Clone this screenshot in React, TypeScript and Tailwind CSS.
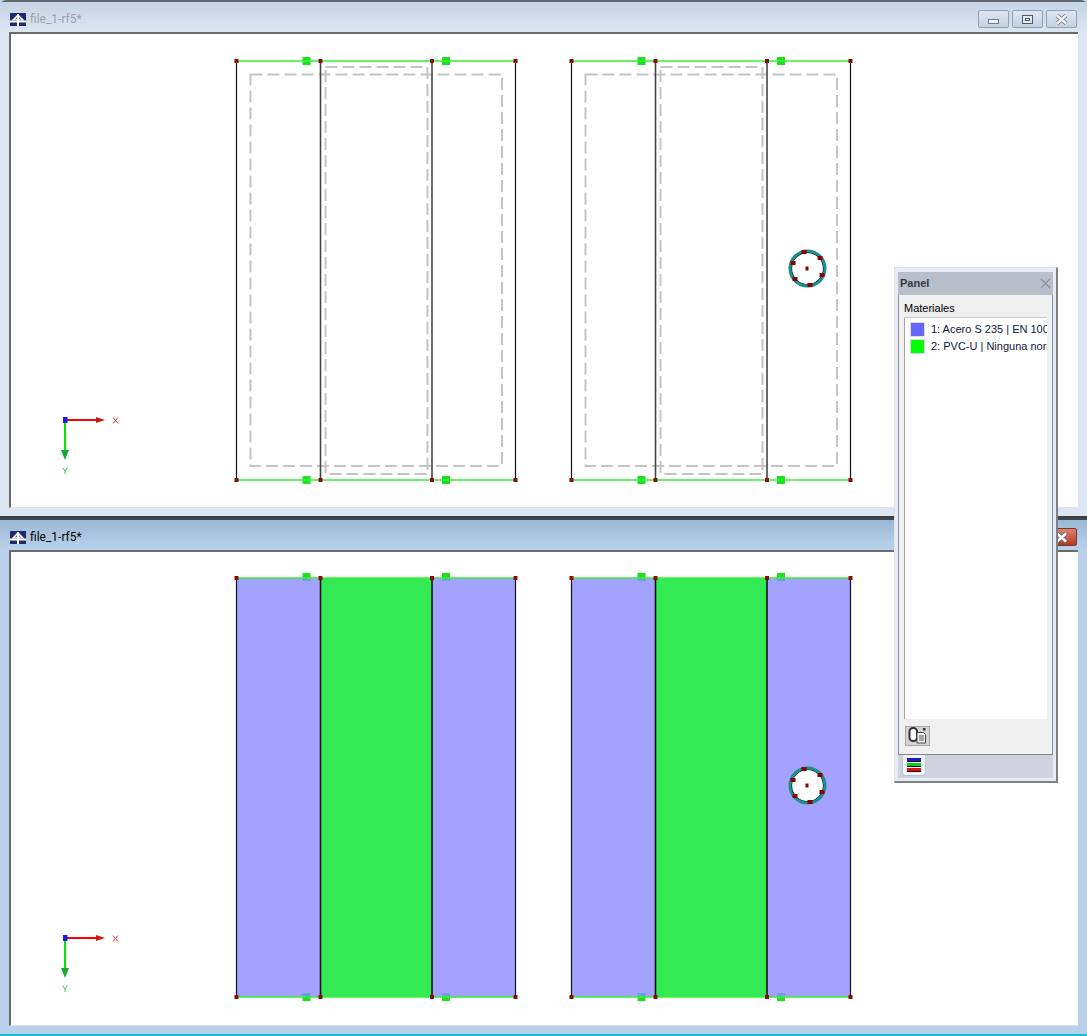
import React from "react";

const titleFont = "font-['Roboto','Liberation_Sans',sans-serif]";
const panelFont = "font-['Liberation_Sans',sans-serif]";

const AppIcon = () => (
  <svg width="16" height="13" viewBox="0 0 16 13" className="shrink-0">
    <rect width="16" height="13" fill="#1f2a6e" />
    <path d="M8 1L1.5 7.5h13z" fill="#fff" />
    <path d="M5.5 6.5L8 3.5l2.5 3" stroke="#1f2a6e" strokeWidth="0.8" fill="none" />
    <rect x="0" y="7.5" width="16" height="2" fill="#fff" />
    <rect x="7" y="1" width="2" height="12" fill="#fff" />
  </svg>
);

const CaptionButton = ({ kind, active }: { kind: "min" | "max" | "close"; active?: boolean }) => {
  const red = kind === "close" && active;
  return (
    <div
      className={
        red
          ? "h-[18px] w-[31px] rounded-[2px] border border-[#7a3a34] bg-gradient-to-b from-[#d9826f] to-[#b5391f] flex items-center justify-center"
          : "h-[18px] w-[31px] rounded-[2px] border border-[#8ea2b5] bg-gradient-to-b from-[#dde7f1] to-[#c3d2e1] flex items-center justify-center"
      }
    >
      {kind === "min" && <div className="h-[5px] w-[11px] mt-[5px] border border-[#6e7c8a] bg-[#eef2f6]" />}
      {kind === "max" && (
        <div className="h-[9px] w-[11px] border border-[#4f5b67] bg-[#dfe7ef] flex items-center justify-center">
          <div className="h-[3px] w-[5px] border border-[#4f5b67]" />
        </div>
      )}
      {kind === "close" && (
        <svg width="13" height="11" viewBox="0 0 13 11">
          <path d="M2 1.5L11 9.5M11 1.5L2 9.5" stroke="#66727e" strokeWidth="4" />
          <path d="M2 1.5L11 9.5M11 1.5L2 9.5" stroke={red ? "#fff" : "#f4f6f8"} strokeWidth="2.4" />
        </svg>
      )}
    </div>
  );
};

const Axes = ({ y }: { y: number }) => (
  <g>
    <line x1="65" y1={y} x2="98" y2={y} stroke="#ff0000" strokeWidth="2" />
    <path d={`M96 ${y - 3}L105 ${y}L96 ${y + 3}z`} fill="#c81818" />
    <line x1="65" y1={y} x2="65" y2={y + 32} stroke="#00e800" strokeWidth="2" />
    <path d={`M61 ${y + 30}L65 ${y + 40}L69 ${y + 30}z`} fill="#18a830" />
    <rect x="63" y={y - 3} width="4.5" height="6" fill="#1a1ae0" />
    <path d={`M113 ${y - 2.5}L118 ${y + 3.5}M118 ${y - 2.5}L113 ${y + 3.5}`} stroke="#d83030" strokeWidth="1" fill="none" />
    <path d={`M62.5 ${y + 47.5}L65 ${y + 51}L67.5 ${y + 47.5}M65 ${y + 51}V${y + 54}`} stroke="#30d030" strokeWidth="1" fill="none" />
  </g>
);

// hole in the right hand panel
const Hole = ({ y }: { y: number }) => (
  <g>
    <circle cx="807.5" cy={y} r="16" fill="#fff" stroke="#111" strokeWidth="1.2" />
    <circle cx="807.5" cy={y} r="17.5" fill="none" stroke="#17908f" strokeWidth="3" />
    {[
      [793, y - 5.5],
      [820, y - 10.5],
      [822, y + 6.5],
      [810, y + 16.5],
      [795, y + 10.5],
      [804, y - 16.5],
    ].map(([cx, cy]) => (
      <rect key={cx} x={cx - 2.5} y={cy - 2} width="5" height="4" fill="#8b0000" />
    ))}
    <rect x="805.5" y={y - 2} width="3" height="4" fill="#8b0000" />
  </g>
);

const Node = ({ x, y }: { x: number; y: number }) => (
  <rect x={x - 2} y={y - 2} width="4" height="4" fill="#8b0a0a" />
);

const Plate = ({ x, top, bottom, filled }: { x: number; top: number; bottom: number; filled: boolean }) => {
  const v1 = x + 84;
  const v2 = x + 195.5;
  const right = x + 279;
  const h = bottom - top;
  const squares = [x + 70, x + 209.5];
  return (
    <g>
      {squares.flatMap((sx) =>
        [filled ? top - 1 : top, bottom].map((sy) => (
          <rect key={`${sx}-${sy}`} x={sx - 4} y={sy - 4} width="8" height="8" fill="#1fe01f" />
        ))
      )}
      {filled && (
        <>
          <rect x={x} y={top} width={84} height={h} fill="#a3a3ff" />
          <rect x={v1} y={top} width={111.5} height={h} fill="#33ea55" />
          <rect x={v2} y={top} width={83.5} height={h} fill="#a3a3ff" />
          {squares.map((sx) => (
            <g key={sx}>
              <rect x={sx - 4} y={top} width="8" height="3" fill="#6f9fd8" />
              <rect x={sx - 4} y={bottom - 4} width="8" height="4" fill="#6f9fd8" />
            </g>
          ))}
        </>
      )}
      {!filled && (
        <>
          <rect x={x + 14} y={top + 13.5} width="251.5" height="391.5" fill="none" stroke="#c4c4c4" strokeWidth="2" strokeDasharray="12 5" />
          <rect x={x + 89} y={top + 6} width="102" height="407" fill="none" stroke="#c4c4c4" strokeWidth="2" strokeDasharray="12 5" />
        </>
      )}
      <line x1={x} y1={top} x2={x} y2={bottom} stroke="#111" strokeWidth="1.2" />
      <line x1={right} y1={top} x2={right} y2={bottom} stroke="#111" strokeWidth="1.2" />
      <line x1={v1} y1={top} x2={v1} y2={bottom} stroke={filled ? "#111" : "#444"} strokeWidth="1.6" />
      <line x1={v2} y1={top} x2={v2} y2={bottom} stroke={filled ? "#111" : "#444"} strokeWidth="1.6" />
      <line x1={x} y1={top} x2={right} y2={top} stroke="#35f035" strokeWidth="1.3" />
      <line x1={x} y1={bottom} x2={right} y2={bottom} stroke="#35f035" strokeWidth="1.3" />
      {[x, v1, v2, right].flatMap((nx) => [<Node key={`t${nx}`} x={nx} y={top} />, <Node key={`b${nx}`} x={nx} y={bottom} />])}
    </g>
  );
};

// viewBox is in page coordinates, the client area starts at x 11
const Drawing = ({ originY, top, axisY, filled }: { originY: number; top: number; axisY: number; filled: boolean }) => (
  <svg className="block w-[1067px] h-[473px]" viewBox={`11 ${originY} 1067 473`}>
    <Plate x={236.5} top={top} bottom={top + 419} filled={filled} />
    <Plate x={571.5} top={top} bottom={top + 419} filled={filled} />
    <Hole y={top + 207.5} />
    <Axes y={axisY} />
  </svg>
);

const MdiWindow = ({ active, originY, top, axisY }: { active: boolean; originY: number; top: number; axisY: number }) => (
  <div
    className={
      active
        ? "h-[518px] flex flex-col border-t-2 border-[#3c4650] bg-[#b9d1ec] border-b-2 border-b-[#19b6d8]"
        : "h-[518px] flex flex-col border-t-2 border-[#5f6870] rounded-t-[6px] bg-[#dbe6f2] border-b-2 border-b-[#3a4047]"
    }
  >
    <div
      className={
        active
          ? "h-[30px] shrink-0 flex items-center pt-[4px] pl-[10px] pr-[10px] bg-gradient-to-b from-[#9db8d4] to-[#b9d2ec]"
          : "h-[30px] shrink-0 flex items-center pt-[4px] pl-[10px] pr-[10px] bg-gradient-to-b from-[#c6d5e3] to-[#d9e6f2]"
      }
    >
      <AppIcon />
      <span className={`ml-[4px] text-[12px] ${titleFont} ${active ? "text-black" : "text-[#9aa3ab]"}`}>file_1-rf5*</span>
      <div className="ml-auto flex gap-[3px]">
        <CaptionButton kind="min" active={active} />
        <CaptionButton kind="max" active={active} />
        <CaptionButton kind="close" active={active} />
      </div>
    </div>
    <div className="flex-1 min-h-0 mx-[9px] mb-[8px] bg-white border-t-2 border-l-2 border-[#6b6b6b] border-b border-b-[#e2e2e2] overflow-hidden">
      <Drawing originY={originY} top={top} axisY={axisY} filled={active} />
    </div>
  </div>
);

const materials = [
  { id: 1, label: "1: Acero S 235 | EN 10025-2", swatch: "bg-[#6666ff]" },
  { id: 2, label: "2: PVC-U | Ninguna norma", swatch: "bg-[#00ff00]" },
];

const Panel = () => (
  <div className={`absolute left-[894px] top-[267px] w-[164px] h-[516px] bg-[#e6ebf4] border border-[#dfe3ea] border-r-2 border-b-2 border-r-[#7d8084] border-b-[#7d8084] px-[3px] pt-[4px] pb-[3px] flex flex-col ${panelFont}`}>
    <div className="h-[23px] shrink-0 flex items-center justify-between bg-[#b9bfca] pl-[2px] pr-[2px]">
      <span className="text-[11px] font-bold text-[#333a44]">Panel</span>
      <svg width="11" height="11" viewBox="0 0 11 11">
        <path d="M1 1l9 9M10 1l-9 9" stroke="#8a9097" strokeWidth="1.2" />
      </svg>
    </div>
    <div className="flex-1 min-h-0 bg-[#f0f0f0] border-x border-[#8b8e92] border-b border-b-[#84878b] px-[5px] flex flex-col">
      <div className="h-[23px] shrink-0 flex items-end pb-[3px] text-[11px] text-black border-b border-[#c8c8c8] leading-none">
        Materiales
      </div>
      <div className="flex-1 min-h-0 bg-white border-l border-[#a5a5a5] pt-[3px] pl-[5px] overflow-hidden">
        {materials.map((m) => (
          <div key={m.id} className="h-[17px] flex items-center whitespace-nowrap">
            <div className={`w-[15px] h-[15px] shrink-0 border border-[#dddddd] ${m.swatch}`} />
            <span className="ml-[6px] text-[11px] text-[#10203a]">{m.label}</span>
          </div>
        ))}
      </div>
      <div className="h-[35px] shrink-0 flex items-center pb-[2px]">
        <div className="w-[25px] h-[20px] ml-[1px] border border-[#a8a8a8] bg-[#d4d4d4] flex items-center justify-center">
          <svg width="19" height="17" viewBox="0 0 19 17">
            <rect x="1.5" y="1" width="7.5" height="13" rx="3.5" fill="#fff" stroke="#333" strokeWidth="2" />
            <path d="M9 5.5h6.5l2 2V16H9z" fill="#f4f4f4" stroke="#444" />
            <path d="M11 9h5M11 11h5M11 13h5" stroke="#555" />
            <rect x="15" y="1" width="2.5" height="2.5" fill="#333" />
          </svg>
        </div>
      </div>
    </div>
    <div className="h-[23px] shrink-0 bg-[#ced3de] pl-[4px]">
      <div className="w-[24px] h-[21px] rounded-b-[3px] bg-[#f3f5f8] border border-t-0 border-[#b8c4d2] flex flex-col items-center justify-center gap-[1px]">
        <div className="w-[14px] h-[4px] bg-[#1a1acc] border-b border-[#111]" />
        <div className="w-[14px] h-[4px] bg-[#10d010] border-b border-[#111]" />
        <div className="w-[14px] h-[4px] bg-[#e01010] border-b border-[#111]" />
      </div>
    </div>
  </div>
);

export default function App() {
  return (
    <div className="relative w-[1087px] h-[1036px] overflow-hidden bg-[#b9d1ec]">
      <MdiWindow active={false} originY={34} top={61} axisY={420} />
      <MdiWindow active originY={552} top={578} axisY={938} />
      <Panel />
    </div>
  );
}
